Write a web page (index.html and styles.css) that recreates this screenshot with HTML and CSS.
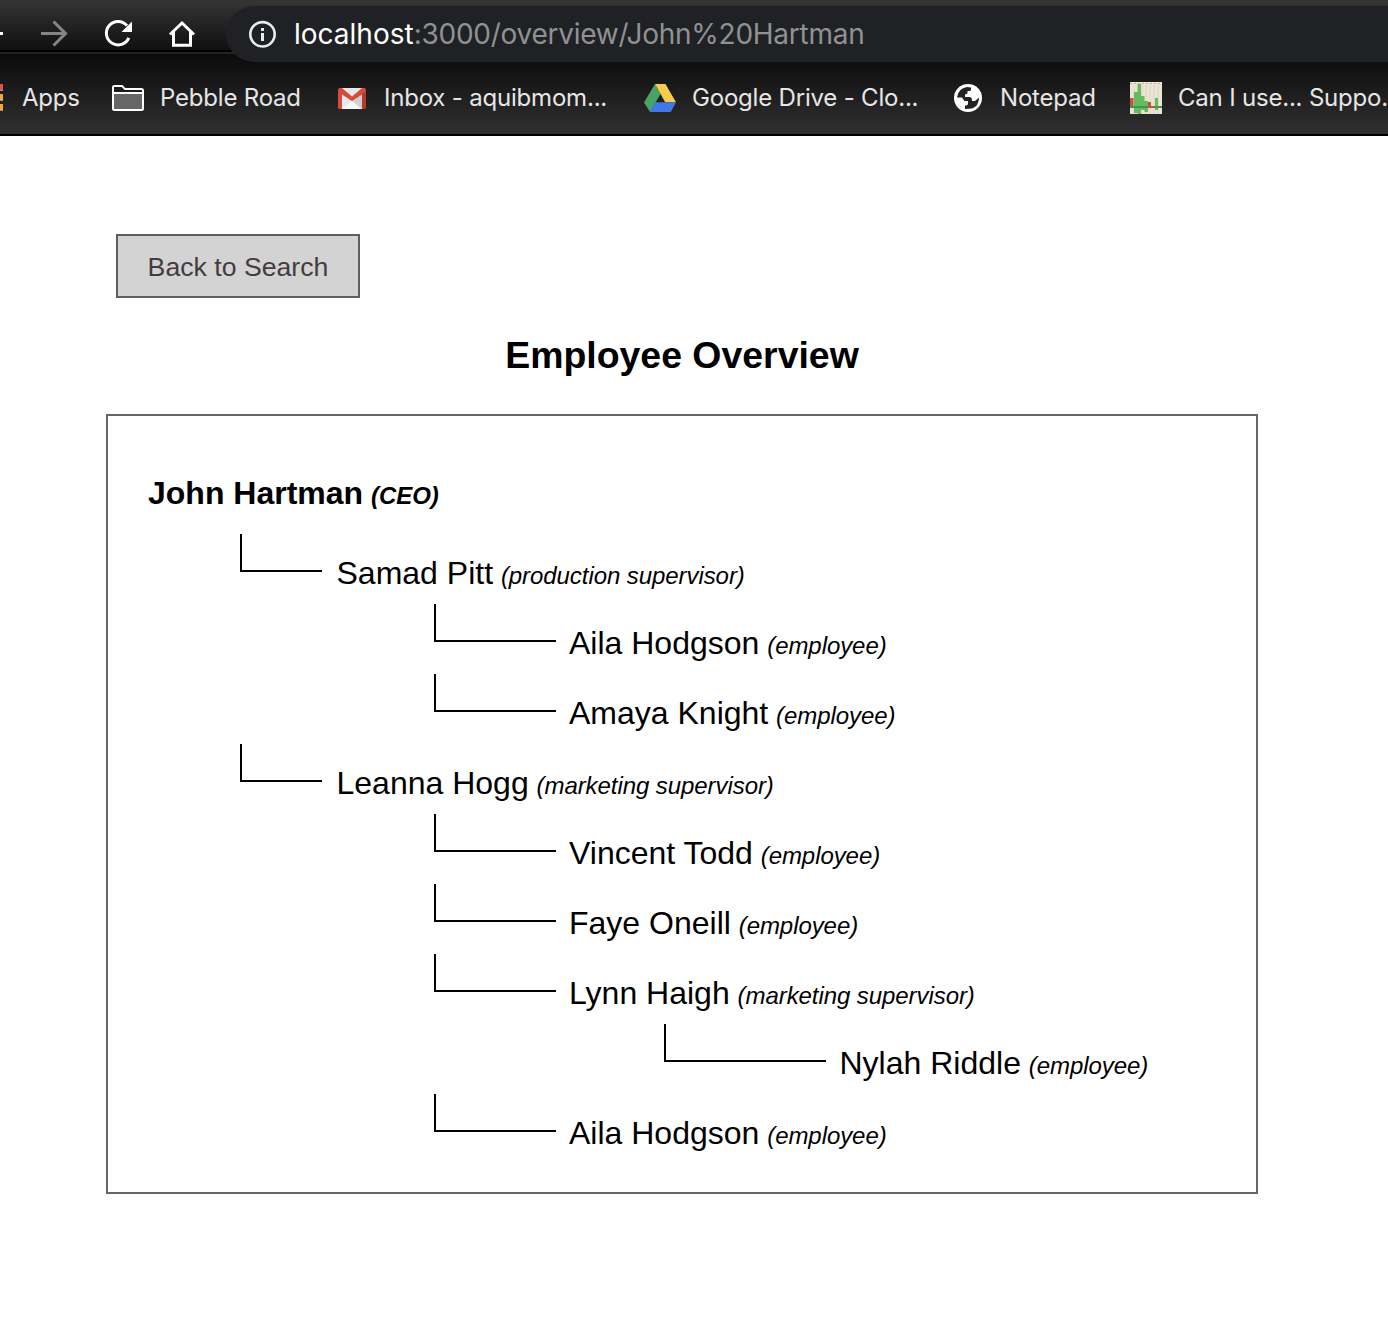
FILE: index.html
```html
<!DOCTYPE html>
<html lang="en">
<head>
<meta charset="utf-8">
<title>Employee Overview</title>
<link rel="stylesheet" href="styles.css">
</head>
<body>
<header class="browser">
  <div class="toolbar">
    <svg class="nav" width="226" height="56" viewBox="0 0 226 56" fill="none" stroke="#fff" stroke-width="3">
      <path d="M0 33.5H3"/>
      <path stroke="#858585" d="M41 33.5H65M53.5 21.5L65.5 33.5L53.5 45.5"/>
      <path d="M127 25.6A11.7 11.7 0 1 0 128.8 37.8"/>
      <path fill="#fff" stroke="none" d="M132 21.5V32H121.5Z"/>
      <path d="M170 34.5L182 23L194 34.5M173.5 32V45.2H190.5V32"/>
    </svg>
    <div class="omnibox">
      <svg width="28" height="28" viewBox="0 0 28 28"><circle cx="13.5" cy="14.3" r="12.2" fill="none" stroke="#e8eaed" stroke-width="2.6"/><path fill="#e8eaed" d="M12 8H15V11H12ZM12 13H15V21H12Z"/></svg>
      <span class="url"><span class="host">localhost</span><span class="path">:3000/overview/John%20Hartman</span></span>
    </div>
  </div>
  <nav class="bookmarks">
    <svg class="apps" width="3" height="28" viewBox="0 0 3 28"><path fill="#ea4e3d" d="M0 0H3V6H0Z"/><path fill="#f0a638" d="M0 10H3V16H0ZM0 20H3V26H0Z"/><path fill="#999" d="M0 6H3V7H0ZM0 16H3V17H0ZM0 26H3V27H0Z"/></svg>
    <span class="label apps-label">Apps</span>
    <svg class="folder" width="32" height="26" viewBox="0 0 32 26"><path fill="#666" d="M2 9H30V24H2Z"/><path fill="none" stroke="#fff" stroke-width="2" d="M1 8V2.2Q1 1 2.2 1H10L13 4H29.5Q31 4 31 5.5V23.5Q31 25 29.5 25H2.5Q1 25 1 23.5V8H31"/></svg>
    <span class="label pebble">Pebble Road</span>
    <svg class="gmail" width="28" height="22" viewBox="0 0 28 22"><path fill="#e8e8e8" d="M3 0H25V21H3Z"/><path fill="#d0d0d0" d="M14 13L25 4V21H20Z"/><path fill="#f7f7f7" d="M14 13L4 21H24Z"/><path fill="#d54b3d" d="M2 0H4L14 8.5L24 0H26Q28 0 28 2V4L14 13L0 4V2Q0 0 2 0Z"/><path fill="#d54b3d" d="M0 3L4 6V21H2Q0 21 0 19.5Z"/><path fill="#b63a30" d="M28 3L24 6V21H26Q28 21 28 19.5Z"/></svg>
    <span class="label inbox">Inbox - aquibmom...</span>
    <svg class="drive" width="32" height="28" viewBox="0 0 32 28"><path fill="#4aa366" d="M11 0L16.5 10L6 28L0 18.5Z"/><path fill="#f7cb52" d="M11 0H21.5L32 18.2H21.2Z"/><path fill="#3f79e8" d="M11.2 18.2H32L26.8 28H5.8Z"/></svg>
    <span class="label gdrive">Google Drive - Clo...</span>
    <svg class="globe" width="28" height="28" viewBox="0 0 28 28"><circle cx="14" cy="14" r="14" fill="#fff"/><path fill="#222" d="M3 13.5Q4 4.500 13 3L17 3.500V5.500Q17 7 15 7H13.500V9.500L11 10.500V13H15Q18 13 18 16V17H21L25 13.500Q25 22 18 24.500L11 25V21.500Q14 21.500 14 19.500V17H10.500L8 13.500Z"/></svg>
    <span class="label notepad">Notepad</span>
    <svg class="chart" width="32" height="32" viewBox="0 0 32 32"><path fill="#ece4d2" d="M0 0H32V32H0Z"/><path stroke="#b8b5a3" stroke-dasharray="2 2" d="M0 1.5H32"/><path stroke="#dcd4c2" d="M4 3V32M8 3V32M12 3V32M16 3V32M20 3V32M24 3V32M28 3V32"/><path fill="#c9503c" d="M0 16H3.5V25H0ZM18 20H21V24H25V26H18Z"/><path fill="#65ba61" d="M4 10H7.5V31H4ZM7.5 2H11V32H7.5ZM11 14H14.5V28H11ZM14.5 19H18V30H14.5ZM25 16H28V28H25Z"/><path fill="#3d9850" d="M0 24H18V26H0ZM25 24H32V26H25Z"/></svg>
    <span class="label caniuse">Can I use... Suppo.</span>
  </nav>
</header>
<main class="page">
  <button class="back"><span>Back to Search</span></button>
  <h1><span>Employee Overview</span></h1>
  <section class="tree">
    <div class="root"><span class="name">John Hartman</span> <em>(CEO)</em></div>
    <div class="row level1"><i class="branch"></i><p><span class="name">Samad Pitt</span> <em>(production supervisor)</em></p></div>
    <div class="row level2"><i class="branch"></i><p><span class="name">Aila Hodgson</span> <em>(employee)</em></p></div>
    <div class="row level2"><i class="branch"></i><p><span class="name">Amaya Knight</span> <em>(employee)</em></p></div>
    <div class="row level1"><i class="branch"></i><p><span class="name">Leanna Hogg</span> <em>(marketing supervisor)</em></p></div>
    <div class="row level2"><i class="branch"></i><p><span class="name">Vincent Todd</span> <em>(employee)</em></p></div>
    <div class="row level2"><i class="branch"></i><p><span class="name">Faye Oneill</span> <em>(employee)</em></p></div>
    <div class="row level2"><i class="branch"></i><p><span class="name">Lynn Haigh</span> <em>(marketing supervisor)</em></p></div>
    <div class="row level3"><i class="branch"></i><p><span class="name">Nylah Riddle</span> <em>(employee)</em></p></div>
    <div class="row level2"><i class="branch"></i><p><span class="name">Aila Hodgson</span> <em>(employee)</em></p></div>
  </section>
</main>
</body>
</html>
```
FILE: styles.css
```css
* { box-sizing: border-box; }
body { margin: 0; width: 1388px; height: 1318px; overflow: hidden; background: #fff; color: #000; font-family: "Liberation Sans", Arial, sans-serif; }
svg { display: block; flex: none; }
.browser { height: 136px; background: linear-gradient(#0b0b0b, #303030) 0 54px / 100% 80px no-repeat #000; overflow: hidden; }
.toolbar { display: flex; height: 54px; background: linear-gradient(#353535, #101010 50px, #000 50px, #000 52px, #242424 52px); }
.omnibox { display: flex; flex: none; align-items: center; width: 1200px; height: 56px; margin-top: 6px; padding-left: 23px; border-radius: 28px; background: #202124; }
.url { margin-left: 17px; font: 28px/40px Inter, sans-serif; white-space: nowrap; color: #909193; }
.host { color: #fff; }
.path { letter-spacing: -0.26px; }
.bookmarks { display: flex; align-items: center; height: 80px; padding-top: 8px; }
.label { flex: none; font: 24px/34px Inter, sans-serif; letter-spacing: -0.2px; color: #e6e6e6; white-space: nowrap; }
.apps-label { width: 90px; margin-left: 19px; }
.pebble { width: 178px; margin-left: 16px; }
.inbox { width: 260px; margin-left: 18px; }
.gdrive { width: 262px; margin-left: 16px; }
.notepad { width: 130px; margin-left: 18px; }
.caniuse { margin-left: 16px; }
.gmail { margin-top: 1px; }
.page { padding: 98px 0 0 106px; }
.back { display: block; width: 244px; height: 64px; margin: 0 0 0 10px; padding: 2px 0 0; border: 2px solid #5f5f5f; background: #d3d3d3; color: #443c3f; font: 26.67px/58px "Liberation Sans", Arial, sans-serif; }
h1 { width: 1152px; margin: 34px 0 0; font-size: 37.44px; line-height: 46px; text-align: center; }
.tree { width: 1152px; height: 780px; margin-top: 36px; padding-top: 58px; border: 2px solid #666; font-size: 32px; }
.tree em { margin-left: -1px; font-size: 24px; letter-spacing: -0.07px; }
.root { height: 60px; padding-left: 40px; font-weight: bold; line-height: 38px; }
.row { display: flex; height: 70px; white-space: nowrap; }
.branch { flex: none; height: 38px; border: solid #000; border-width: 0 0 2px 2px; }
.row p { margin: 20px 0 0 13px; line-height: 38px; }
.level1 { padding-left: 132px; }
.level1 .branch { width: 82px; }
.level1 p { margin-left: 14.5px; }
.level2 { padding-left: 326px; }
.level2 .branch { width: 122px; }
.level3 { padding-left: 556px; }
.level3 .branch { width: 162px; }
.level3 p { margin-left: 13.5px; }
```
